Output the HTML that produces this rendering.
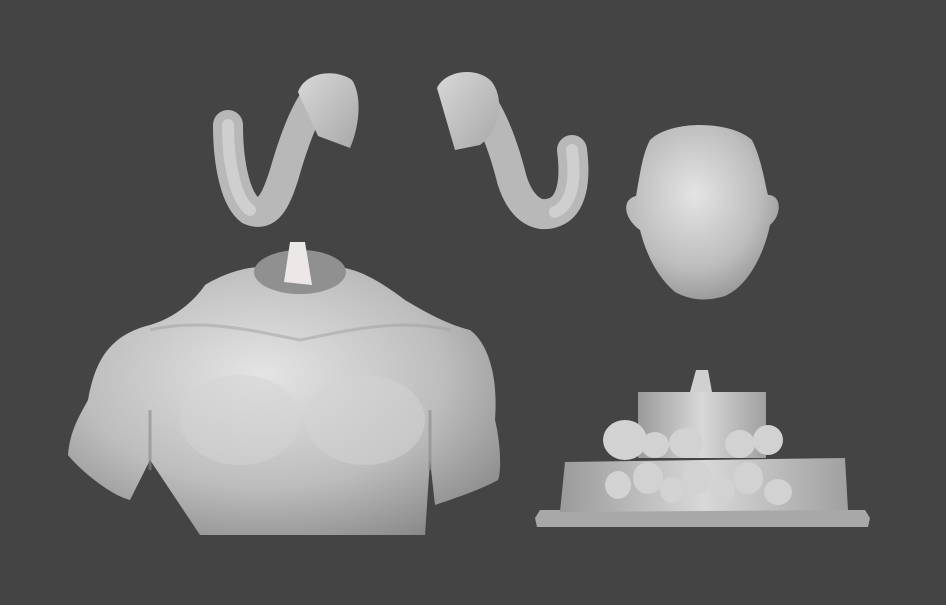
<!DOCTYPE html>
<html><head><meta charset="utf-8"><style>
html,body{margin:0;padding:0;background:#444;}
svg{display:block}
</style></head><body>
<svg width="946" height="605" viewBox="0 0 946 605" xmlns="http://www.w3.org/2000/svg">
<defs>
<radialGradient id="g" cx="45%" cy="40%" r="70%"><stop offset="0" stop-color="#e4e4e4"/><stop offset="0.6" stop-color="#bdbdbd"/><stop offset="1" stop-color="#8a8a8a"/></radialGradient>
<linearGradient id="h" x1="0" y1="0" x2="1" y2="0"><stop offset="0" stop-color="#9a9a9a"/><stop offset="0.5" stop-color="#d8d8d8"/><stop offset="1" stop-color="#a0a0a0"/></linearGradient>
<linearGradient id="v" x1="0" y1="0" x2="1" y2="1"><stop offset="0" stop-color="#d8d8d8"/><stop offset="1" stop-color="#a8a8a8"/></linearGradient>
</defs>
<rect width="946" height="605" fill="#444"/>
<g fill="none" stroke-linecap="round">
<path d="M228,125 C228,165 236,200 250,210 C268,218 276,200 284,175 C294,140 305,110 320,92" stroke="#b8b8b8" stroke-width="30"/>
<path d="M572,150 C576,180 572,205 555,212 C535,220 520,205 512,180 C502,140 490,112 474,92" stroke="#b8b8b8" stroke-width="30"/>
<path d="M228,125 C228,165 236,200 250,210" stroke="#cfcfcf" stroke-width="12"/>
<path d="M572,150 C576,180 572,205 555,212" stroke="#cfcfcf" stroke-width="12"/>
</g>
<path d="M298,92 C305,72 335,68 352,80 C362,95 360,125 350,148 L318,136 Z" fill="url(#v)"/>
<path d="M437,88 C445,70 478,66 492,82 C505,100 500,130 480,145 L455,150 Z" fill="url(#v)"/>
<!-- head -->
<path d="M650,140 C670,120 730,120 752,140 C762,160 765,185 768,195 C782,195 782,215 770,225 C765,250 750,285 725,296 C705,302 690,300 675,292 C655,275 645,250 640,230 C625,220 620,200 636,196 C640,175 642,155 650,140 Z" fill="url(#g)"/>
<!-- torso -->
<path d="M205,285 C230,270 255,265 270,268 L345,268 C365,272 385,285 405,300 C430,315 450,325 470,330 C490,345 498,380 495,420 C500,440 502,470 498,480 C480,490 450,500 435,505 L430,460 L425,535 L200,535 L150,460 L130,500 C110,495 80,470 68,455 C70,430 80,415 88,400 C95,360 110,335 150,325 C175,318 195,300 205,285 Z" fill="url(#g)"/>
<path d="M150,330 C200,318 250,330 300,340 C350,330 400,318 450,330" fill="none" stroke="#a0a0a0" stroke-width="3" opacity="0.5"/>
<ellipse cx="240" cy="420" rx="60" ry="45" fill="#d4d4d4" opacity="0.5"/>
<ellipse cx="365" cy="420" rx="60" ry="45" fill="#d4d4d4" opacity="0.5"/>
<path d="M150,410 L150,470 M430,410 L430,470" stroke="#8a8a8a" stroke-width="3" opacity="0.6"/>
<ellipse cx="300" cy="272" rx="46" ry="22" fill="#909090"/>
<path d="M290,242 L305,242 L312,285 L284,282 Z" fill="#ece8e8"/>
<!-- base -->
<path d="M535,518 L540,510 L865,510 L870,518 L868,527 L537,527 Z" fill="#a8a8a8"/>
<path d="M565,462 L845,458 L848,510 L560,512 Z" fill="url(#h)"/>
<rect x="638" y="392" width="128" height="66" fill="url(#h)"/>
<path d="M696,370 L708,370 L712,392 L690,392 Z" fill="#d0d0d0"/>
<g fill="#d2d2d2">
<ellipse cx="625" cy="440" rx="22" ry="20"/><ellipse cx="655" cy="445" rx="14" ry="13"/><ellipse cx="686" cy="443" rx="17" ry="15"/><ellipse cx="740" cy="444" rx="15" ry="14"/><ellipse cx="768" cy="440" rx="15" ry="15"/>
<ellipse cx="618" cy="485" rx="13" ry="14"/><ellipse cx="648" cy="478" rx="15" ry="16"/><ellipse cx="672" cy="490" rx="12" ry="13"/><ellipse cx="697" cy="478" rx="15" ry="16"/><ellipse cx="723" cy="490" rx="12" ry="13"/><ellipse cx="748" cy="478" rx="15" ry="16"/><ellipse cx="778" cy="492" rx="14" ry="13"/>
</g>
</svg>
</body></html>
